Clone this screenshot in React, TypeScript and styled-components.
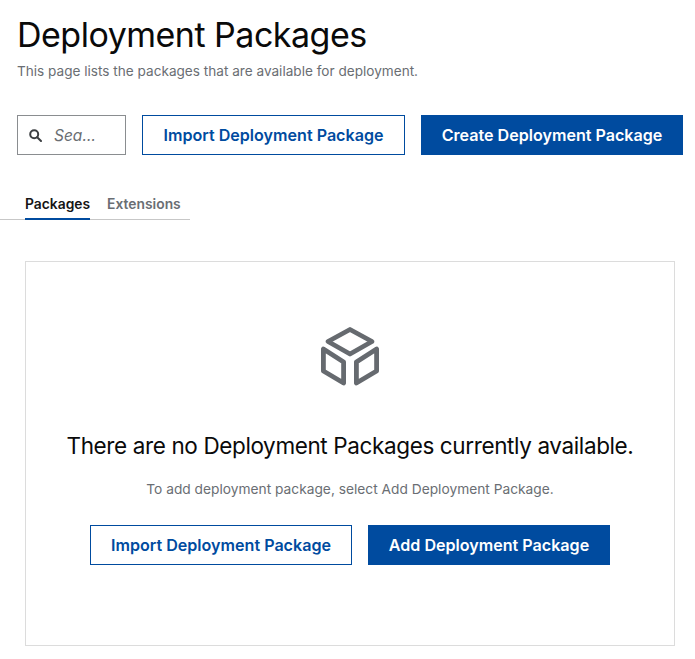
import * as React from 'react';
import styled, { createGlobalStyle } from 'styled-components';

var GlobalStyle = createGlobalStyle`
	html, body {
		margin: 0;
		padding: 0;
		background: #fff;
		font-family: Inter, 'Noto Sans', sans-serif;
	}
`;

function SearchIcon() {
	return (
		<svg width='13' height='13' viewBox='0 0 13 13' fill='none' stroke='#3c3f42' strokeWidth='2'>
			<circle cx='5.2' cy='5.2' r='4' />
			<path d='M8.2 8.2 L12 12' strokeLinecap='round' />
		</svg>
	);
}

function BoxIcon() {
	return (
		<svg width='58' height='61' viewBox='0 0 58 61' fill='none' stroke='#666a6f' strokeWidth='4.8' strokeLinejoin='round'>
			<path d='M29 3.5 L51 15.5 L29 28 L7 15.5 Z' />
			<path d='M2.4 23 L2.4 45 L22.6 57 L22.6 36 Z' />
			<path d='M55.6 23 L55.6 45 L35.4 57 L35.4 36 Z' />
		</svg>
	);
}

function App() {
	return (
		<Page>
			<GlobalStyle />
			<Header>
				<Title>Deployment Packages</Title>
				<Subtitle>This page lists the packages that are available for deployment.</Subtitle>
			</Header>
			<Toolbar>
				<SearchBox>
					<SearchIcon />
					<SearchInput placeholder='Search' defaultValue='' aria-label='Search' />
				</SearchBox>
				<ActionButton $variant='secondary' $width={263}>Import Deployment Package</ActionButton>
				<ActionButton $variant='primary' $width={262}>Create Deployment Package</ActionButton>
			</Toolbar>
			<Tabs>
				<Tab $active>Packages</Tab>
				<Tab>Extensions</Tab>
			</Tabs>
			<Card>
				<BoxIcon />
				<EmptyTitle>There are no Deployment Packages currently available.</EmptyTitle>
				<EmptyText>To add deployment package, select Add Deployment Package.</EmptyText>
				<EmptyActions>
					<ActionButton $variant='secondary' $width={262}>Import Deployment Package</ActionButton>
					<ActionButton $variant='primary' $width={242}>Add Deployment Package</ActionButton>
				</EmptyActions>
			</Card>
		</Page>
	);
}

export default App;

var Page = styled.div`
	width: 695px;
	height: 659px;
	overflow: hidden;
	box-sizing: border-box;
	padding-top: 14px;
`;

var Header = styled.div`
	padding-left: 17px;
`;

var Title = styled.h1`
	margin: 0;
	font-size: 34px;
	line-height: 42px;
	font-weight: 400;
	letter-spacing: -0.5px;
	color: #0a0a0a;
`;

var Subtitle = styled.p`
	margin: 6px 0 0;
	font-size: 13.6px;
	line-height: 18px;
	color: #6a6e73;
`;

var Toolbar = styled.div`
	display: flex;
	gap: 16px;
	margin-top: 35px;
	padding-left: 17px;
`;

var SearchBox = styled.div`
	display: flex;
	align-items: center;
	gap: 12px;
	box-sizing: border-box;
	width: 109px;
	height: 40px;
	padding-left: 11px;
	border: 1px solid #8a8d90;
`;

var SearchInput = styled.input`
	width: 42px;
	padding: 0;
	border: 0;
	outline: 0;
	font-family: inherit;
	font-size: 15.5px;
	font-style: italic;
	color: #6a6e73;
	text-overflow: ellipsis;

	&::placeholder {
		color: #6a6e73;
		opacity: 1;
	}
`;

var ActionButton = styled.button<{ $variant: 'primary' | 'secondary'; $width: number }>`
	box-sizing: border-box;
	flex: none;
	width: ${(p) => p.$width}px;
	height: 40px;
	padding: 0;
	border: 1px solid #004b9f;
	border-radius: 0;
	background: ${(p) => (p.$variant === 'primary' ? '#004b9f' : '#fff')};
	color: ${(p) => (p.$variant === 'primary' ? '#fff' : '#004b9f')};
	font-family: inherit;
	font-size: 16.1px;
	font-weight: 600;
	white-space: nowrap;
`;

var Tabs = styled.div`
	display: flex;
	gap: 17px;
	box-sizing: border-box;
	width: 190px;
	height: 30px;
	margin-top: 35px;
	padding-left: 25px;
	border-bottom: 1px solid #c7c7c7;
`;

var Tab = styled.div<{ $active?: boolean }>`
	height: 30px;
	box-sizing: border-box;
	padding-top: 5px;
	border-bottom: ${(p) => (p.$active ? '2px solid #004b9f' : '0')};
	font-size: 13.85px;
	line-height: 18px;
	font-weight: 600;
	color: ${(p) => (p.$active ? '#151515' : '#6a6e73')};
`;

var Card = styled.div`
	display: flex;
	flex-direction: column;
	align-items: center;
	box-sizing: border-box;
	width: 650px;
	height: 385px;
	margin: 41px 0 0 25px;
	padding-top: 64px;
	border: 1px solid #dcdcdc;
`;

var EmptyTitle = styled.h2`
	margin: 45px 0 0;
	font-size: 22.5px;
	line-height: 28px;
	font-weight: 400;
	letter-spacing: -0.38px;
	white-space: nowrap;
	color: #0a0a0a;
`;

var EmptyText = styled.p`
	margin: 20px 0 0;
	font-size: 13.75px;
	line-height: 18px;
	color: #6a6e73;
`;

var EmptyActions = styled.div`
	display: flex;
	gap: 16px;
	margin-top: 27px;
`;
